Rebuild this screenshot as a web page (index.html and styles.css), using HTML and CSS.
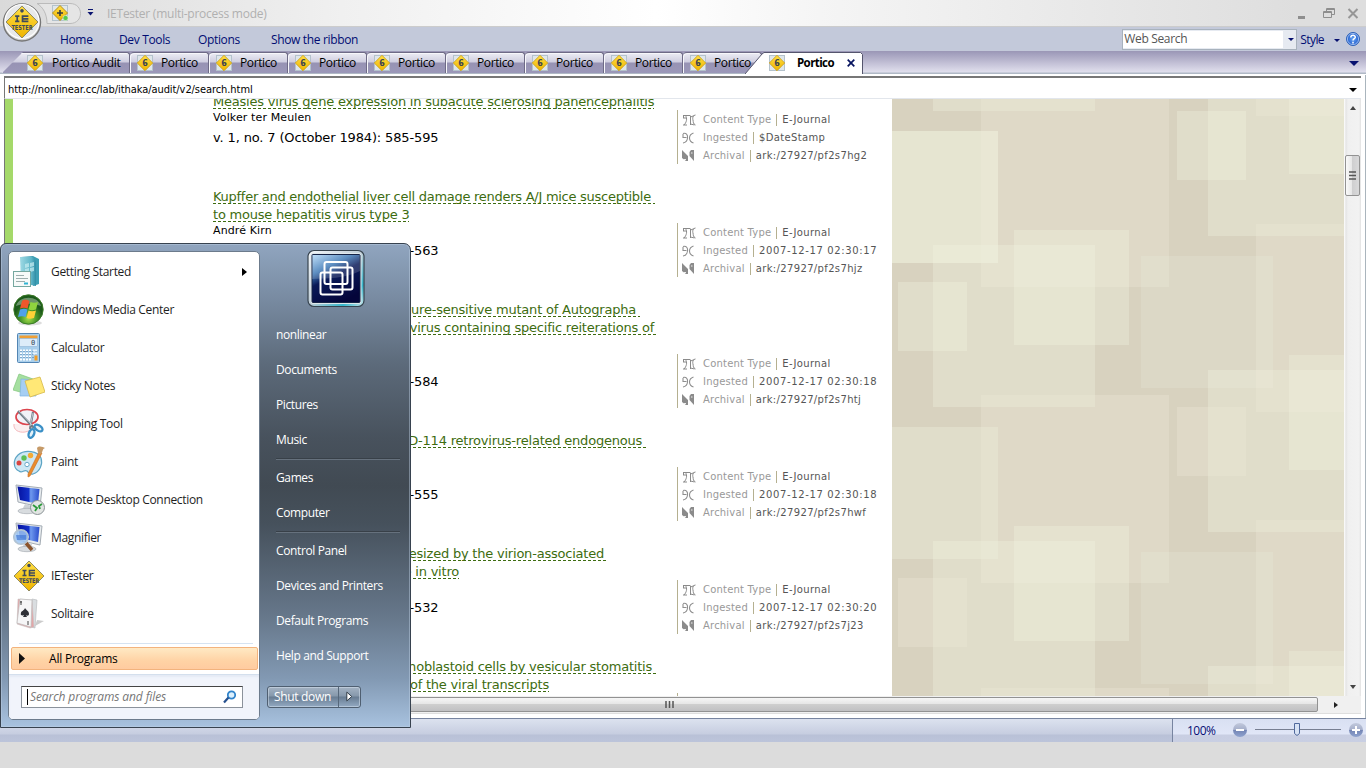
FILE: index.html
```html
<!DOCTYPE html>
<html lang="en">
<head>
<meta charset="utf-8">
<title>IETester</title>
<link rel="stylesheet" href="styles.css">
</head>
<body>
<svg class="defs" width="0" height="0">
  <defs>
    <linearGradient id="gold" x1="0" y1="0" x2="0" y2="1"><stop offset="0" stop-color="#ffdf45"/><stop offset="1" stop-color="#efb400"/></linearGradient>
    <linearGradient id="screen" x1="0" y1="0" x2="1" y2="0"><stop offset="0" stop-color="#0512a0"/><stop offset=".5" stop-color="#1230c8"/><stop offset=".6" stop-color="#6f9aee"/><stop offset="1" stop-color="#2a4ccc"/></linearGradient>
    <linearGradient id="knob" x1="0" y1="0" x2="0" y2="1"><stop offset="0" stop-color="#c2c9dc"/><stop offset=".48" stop-color="#a5afca"/><stop offset=".5" stop-color="#7384b4"/><stop offset="1" stop-color="#8fa3cf"/></linearGradient>
    <radialGradient id="help"><stop offset="0" stop-color="#69a7f5"/><stop offset="1" stop-color="#1c57c9"/></radialGradient>
    <linearGradient id="teal" x1="0" y1="0" x2="1" y2="0"><stop offset="0" stop-color="#9ed9e4"/><stop offset=".7" stop-color="#5fb6c8"/><stop offset="1" stop-color="#2f8da5"/></linearGradient>
    <radialGradient id="wmc" cx=".5" cy=".8"><stop offset="0" stop-color="#a9e04a"/><stop offset=".5" stop-color="#4f9d2c"/><stop offset="1" stop-color="#1d5a1b"/></radialGradient>
    <linearGradient id="avatar" x1=".1" y1="0" x2=".6" y2="1"><stop offset="0" stop-color="#a8d0f2"/><stop offset=".3" stop-color="#3d78b5"/><stop offset=".5" stop-color="#0a1a58"/><stop offset="1" stop-color="#04053a"/></linearGradient>
    <linearGradient id="rim" x1="0" y1="0" x2="1" y2="1"><stop offset="0" stop-color="#f4f8fb"/><stop offset=".5" stop-color="#bfcdd6"/><stop offset=".8" stop-color="#35b6cc"/><stop offset="1" stop-color="#cfe6ec"/></linearGradient>
    <symbol id="six" viewBox="0 0 16 16">
      <rect x=".5" y=".5" width="15" height="15" fill="#dfe6ea" stroke="#b4c2cc"/>
      <path d="M8 .3 15.7 8 8 15.7.3 8z" fill="url(#gold)" stroke="#c99a12" stroke-width=".8"/>
      <text x="8" y="11" text-anchor="middle" font-family="DejaVu Sans" font-weight="bold" font-size="8" fill="#3d4450">6</text>
    </symbol>
    <symbol id="sign" viewBox="0 0 32 32">
      <path d="M16 1 31 16 16 31 1 16z" fill="url(#gold)" stroke="#85815a" stroke-width=".9" stroke-linejoin="round"/>
      <circle cx="16" cy="5.500" r="1.700" fill="#3e4a5c"/>
      <path d="M9.500 10.500h4M9.500 15.500h4M11.500 10v6M22 10.500h-5.500v5H22M16.500 13H22" fill="none" stroke="#3e4a5c" stroke-width="1.600"/>
      <text x="16" y="23.300" text-anchor="middle" textLength="20" lengthAdjust="spacingAndGlyphs" font-family="DejaVu Sans" font-weight="bold" font-size="6.400" fill="#3e4a5c">TESTER</text>
    </symbol>
    <symbol id="monitor" viewBox="0 0 32 32">
      <path d="M3 1 29 4 27 23 5 18z" fill="#e8ecef" stroke="#a4acb4"/>
      <path d="M4.500 2.500 26.500 5 25 20 7 16z" fill="url(#screen)"/>
      <path d="M12 20 19 22 18 27 9 26z" fill="#cdd2d7"/><ellipse cx="14" cy="27" rx="9" ry="2.700" fill="#d8dcdf" stroke="#a7adb3" stroke-width=".7"/>
    </symbol>
    <symbol id="i-type" viewBox="0 0 14 12"><path d="M1 1.500h7M1 4h3M1 11h4M3.500 1.500c2 3 1 7-1.500 9.500M8.500 1.500v9.500M1.500 1v3M13.500 1c-3 .5-3 3.500-2.500 5 .4 2 0 4 2.500 5M8.500 3l4-1.500M8.500 10l4 1" fill="none" stroke="#8a8a8a"/></symbol>
    <symbol id="i-ing" viewBox="0 0 14 12"><path d="M1 1.500c3-1 5 1 4.500 4.500C5.300 8.500 4 10.500 1 11M1 2v3.500h3.500M11.500 1C8.500 2 7.500 4 7.500 6s1 4 4 5" fill="none" stroke="#8e8e8e" stroke-width="1.100"/></symbol>
    <symbol id="i-arch" viewBox="0 0 14 12"><path d="M0 0 6 6v5H4L0 8zM7.500 2 9 0h3v11l-4.500-5z" fill="#8b8b8b"/><path d="M9 3h1.500M2 9.500h2" stroke="#eee"/></symbol>
  </defs>
</svg>

<div class="window">
  <header class="titlebar">
    <svg class="qat" width="110" height="27" viewBox="0 0 110 27">
      <path d="M37 3.500H70c14 0 14 20 0 20H47C47 14 43 7 37 3.500z" fill="#e5e5e5" stroke="#bbb"/>
      <rect x="52.500" y="5.500" width="15" height="15" fill="#e1e7e9" stroke="#b4c2cc"/>
      <path d="M60 5.500 67.500 13 60 20.500 52.500 13z" fill="url(#gold)" stroke="#b48e1a"/>
      <path d="M60 10v6M57 13h6" stroke="#333d44" stroke-width="1.600"/>
      <circle cx="65.500" cy="18" r="2.600" fill="#58c94b" stroke="#e8f6e5" stroke-width=".6"/>
      <path d="M88 9.500h5" stroke="#0a1470"/><path d="M87.500 12h6l-3 3.500z" fill="#0a1470"/>
    </svg>
    <h1>IETester (multi-process mode)</h1>
    <svg class="controls" width="70" height="20" viewBox="-4 0 70 20">
      <path d="M-2 14.500h7" stroke="#8e8e8e" stroke-width="3"/>
      <path d="M26.500 8V5.500h8v6H32M26.500 6.500h8M23.500 8.500h8v6h-8zM23.500 9.500h8" fill="none" stroke="#8e8e8e"/>
      <path d="M48.500 6l9 9M57.500 6l-9 9" stroke="#969696" stroke-width="2"/>
    </svg>
  </header>

  <nav class="menubar">
    <span class="m1">Home</span><span class="m2">Dev Tools</span><span class="m3">Options</span><span class="m4">Show the ribbon</span>
    <div class="search"><div class="search-text">Web Search</div><i class="arrow navy"></i></div>
    <span class="style">Style</span><i class="arrow navy"></i>
    <svg class="help" width="14" height="14" viewBox="0 0 14 14"><circle cx="7" cy="7" r="6.500" fill="url(#help)" stroke="#2e62b8"/><circle cx="7" cy="7" r="5.600" fill="none" stroke="#c5dcfa" stroke-width=".7"/><path d="M4.800 5.500C4.800 2.600 9.400 2.700 9.300 5.200 9.200 6.700 7 6.700 7 8.500M7 9.700v1.700" fill="none" stroke="#fff" stroke-width="1.500"/></svg>
  </nav>

  <div class="tabs">
    <div class="tab first"><svg class="ico"><use href="#six"/></svg><span>Portico Audit</span></div>
    <div class="tab"><svg class="ico"><use href="#six"/></svg><span>Portico</span></div>
    <div class="tab"><svg class="ico"><use href="#six"/></svg><span>Portico</span></div>
    <div class="tab"><svg class="ico"><use href="#six"/></svg><span>Portico</span></div>
    <div class="tab"><svg class="ico"><use href="#six"/></svg><span>Portico</span></div>
    <div class="tab"><svg class="ico"><use href="#six"/></svg><span>Portico</span></div>
    <div class="tab"><svg class="ico"><use href="#six"/></svg><span>Portico</span></div>
    <div class="tab"><svg class="ico"><use href="#six"/></svg><span>Portico</span></div>
    <div class="tab"><svg class="ico"><use href="#six"/></svg><span>Portico</span></div>
    <div class="active">
      <svg class="active-shape" width="118" height="22" viewBox="0 0 118 22"><path d="M0 22 17 2 19 .5H115.500L117.500 2.500V22z" fill="#fff"/><path d="M0 22 17 2 19 .5H115.500L117.500 2.500V22" fill="none" stroke="#55556d"/></svg>
      <svg class="ico"><use href="#six"/></svg><b>Portico</b>
      <svg class="close" width="8" height="8" viewBox="0 0 8 8"><path d="M.7.7l6.600 6.600M7.300.7.700 7.300" stroke="#06135f" stroke-width="1.700"/></svg>
    </div>
    <i class="arrow navy big"></i>
  </div>

  <div class="frame">
    <div class="address"><span>http://nonlinear.cc/lab/ithaka/audit/v2/search.html</span><i class="arrow big"></i></div>
    <div class="view">
      <main class="page">
        <div class="green"></div>
        <div class="list">
          <article class="lead">
            <div class="cite"><h2><span>Measles virus gene expression in subacute sclerosing panencephalitis</span></h2><p class="author">Volker ter Meulen</p><p class="vol">v. 1, no. 7 (October 1984): 585-595</p></div>
            <ul class="meta"><li><svg><use href="#i-type"/></svg><em>Content Type</em><q>E-Journal</q></li><li><svg><use href="#i-ing"/></svg><em>Ingested</em><q>$DateStamp</q></li><li><svg><use href="#i-arch"/></svg><em>Archival</em><q>ark:/27927/pf2s7hg2</q></li></ul>
          </article>
          <article>
            <div class="cite"><h2><span class="tight">Kupffer and endothelial liver cell damage renders A/J mice susceptible&nbsp;</span><span>to mouse hepatitis virus type 3</span></h2><p class="author">André Kirn</p><p class="vol">v. 1, no. 7 (October 1984): 555-563</p></div>
            <ul class="meta"><li><svg><use href="#i-type"/></svg><em>Content Type</em><q>E-Journal</q></li><li><svg><use href="#i-ing"/></svg><em>Ingested</em><q class="date">2007-12-17 02:30:17</q></li><li><svg><use href="#i-arch"/></svg><em>Archival</em><q>ark:/27927/pf2s7hjz</q></li></ul>
          </article>
          <article>
            <div class="cite ends"><h2><span class="e427">A temperature-sensitive mutant of Autographa&nbsp;</span><span class="e445">nuclear polyhedrosis virus containing specific reiterations of&nbsp;</span><span>&nbsp;</span></h2><p class="author"></p><p class="vol">v. 1, no. 7 (October 1984): 573-584</p></div>
            <ul class="meta"><li><svg><use href="#i-type"/></svg><em>Content Type</em><q>E-Journal</q></li><li><svg><use href="#i-ing"/></svg><em>Ingested</em><q class="date">2007-12-17 02:30:18</q></li><li><svg><use href="#i-arch"/></svg><em>Archival</em><q>ark:/27927/pf2s7htj</q></li></ul>
          </article>
          <article>
            <div class="cite ends"><h2><span class="e433">Expression of RD-114 retrovirus-related endogenous&nbsp;</span><span>&nbsp;</span></h2><p class="author"></p><p class="vol">v. 1, no. 7 (October 1984): 545-555</p></div>
            <ul class="meta"><li><svg><use href="#i-type"/></svg><em>Content Type</em><q>E-Journal</q></li><li><svg><use href="#i-ing"/></svg><em>Ingested</em><q class="date">2007-12-17 02:30:18</q></li><li><svg><use href="#i-arch"/></svg><em>Archival</em><q>ark:/27927/pf2s7hwf</q></li></ul>
          </article>
          <article>
            <div class="cite ends"><h2><span class="e395">RNA synthesized by the virion-associated&nbsp;</span><span class="e246">polymerase in vitro</span></h2><p class="author"></p><p class="vol">v. 1, no. 7 (October 1984): 521-532</p></div>
            <ul class="meta"><li><svg><use href="#i-type"/></svg><em>Content Type</em><q>E-Journal</q></li><li><svg><use href="#i-ing"/></svg><em>Ingested</em><q class="date">2007-12-17 02:30:20</q></li><li><svg><use href="#i-arch"/></svg><em>Archival</em><q>ark:/27927/pf2s7j23</q></li></ul>
          </article>
          <article>
            <div class="cite ends"><h2><span class="e443">Infection of lymphoblastoid cells by vesicular stomatitis&nbsp;</span><span class="e336">virus: analysis of the viral transcripts</span></h2><p class="author"></p><p class="vol"></p></div>
            <ul class="meta"></ul>
          </article>
        </div>
        <svg class="pattern" width="452" height="597" viewBox="892 99 452 597" shape-rendering="crispEdges">
          <defs>
            <g id="tile">
              <rect x="981" y="99" width="188" height="188" fill="#f0ecdc" opacity=".28"/>
              <rect x="933" y="245" width="162" height="162" fill="#f1f3e0" opacity=".35"/>
              <rect x="1014" y="230" width="115" height="115" fill="#f1f3e0" opacity=".35"/>
              <rect x="1141" y="256" width="132" height="132" fill="#ebf0dc" opacity=".24"/>
              <rect x="1208" y="370" width="140" height="162" fill="#f1f3e0" opacity=".35"/>
              <rect x="1289" y="355" width="60" height="115" fill="#f1f3e0" opacity=".35"/>
              <rect x="1256" y="224" width="90" height="188" fill="#f0ecdc" opacity=".28"/>
            </g>
          </defs>
          <rect x="892" y="99" width="452" height="597" fill="#d8d2bf"/>
          <rect x="892" y="131" width="106" height="132" fill="#f1f3e0" opacity=".57"/>
          <rect x="892" y="427" width="106" height="132" fill="#f1f3e0" opacity=".35"/>
          <use href="#tile" y="-296"/><use href="#tile"/><use href="#tile" y="296"/><use href="#tile" y="589"/>
          <rect x="898" y="282" width="69" height="69" fill="#f1f3e0" opacity=".35"/>
          <rect x="898" y="578" width="69" height="69" fill="#f0ecdc" opacity=".28"/>
          <rect x="1177" y="111" width="69" height="69" fill="#f1f3e0" opacity=".35"/>
          <rect x="1177" y="407" width="69" height="69" fill="#f0ecdc" opacity=".28"/>
        </svg>
        <div class="vscroll"><i class="tri up"></i><div class="vthumb"><svg width="7" height="9" viewBox="0 0 7 9"><path d="M0 1h7M0 4.500h7M0 8h7" stroke="#555" stroke-width="1.500"/></svg></div><i class="tri down"></i></div>
      </main>
      <div class="hscroll"><div class="hthumb"></div><svg class="grip" width="9" height="7" viewBox="0 0 9 7"><path d="M1 0v7M4.500 0v7M8 0v7" stroke="#555" stroke-width="1.500"/></svg><i class="tri right"></i></div>
    </div>
  </div>

  <footer class="status">
    <div class="zoom"><span>100%</span>
      <svg width="134" height="18" viewBox="0 0 134 18"><circle cx="8" cy="9" r="7" fill="url(#knob)"/><path d="M4 9h8" stroke="#fff" stroke-width="2"/><path d="M23 8.500h86" stroke="#777f92"/><path d="M62.500 2.500h5v10l-2.500 2-2.500-2z" fill="#d7e2f4" stroke="#50699c"/><circle cx="124" cy="9" r="7" fill="url(#knob)"/><path d="M120 9h8M124 5v8" stroke="#fff" stroke-width="2"/></svg>
    </div>
  </footer>
</div>

<svg class="orb" width="40" height="40" viewBox="0 0 40 40"><circle cx="20" cy="20.500" r="18.500" fill="#d0d0d0" stroke="#777" stroke-width="1.400"/><circle cx="20" cy="19.500" r="17" fill="#e8e9ea" stroke="#fff" stroke-width="1.200"/><svg x="3" y="3" width="34" height="34"><use href="#sign"/></svg></svg>

<aside class="start">
  <section class="left">
    <ul class="apps">
      <li><svg viewBox="0 0 32 32"><path d="M8 1 20 0l6 3v25l-6 2V8z" fill="#3d9fb4"/><path d="M7 1h12c3 1 4 4 4 9v20L8 27z" fill="url(#teal)"/><path d="M12 8l4-1v4l-4 1zM17 7l4-1v4l-4 1zM12 13l4-1v4l-4 1zM17 12l4-1v4l-4 1z" fill="#c9eef2" opacity=".7"/><rect x=".5" y="15.500" width="17" height="15" fill="#f7faf9" stroke="#75a79f"/><path d="M3 19.500h8M3 22.500h12M3 25.500h9" stroke="#9daeae"/><path d="M11 27.500h4" stroke="#31b3d3" stroke-width="2"/></svg><span>Getting Started</span><i class="more"></i></li>
      <li><svg viewBox="0 0 32 32"><ellipse cx="17" cy="29" rx="12" ry="2.500" fill="#bbb" opacity=".5"/><circle cx="15.500" cy="15.500" r="14.700" fill="url(#wmc)" stroke="#3c7b27"/><path d="M3 12C6 1 25 1 28 12 20 9 11 9 3 12z" fill="#fff" opacity=".35"/><path d="M9 7c3-2 5-1 7.500 0l-2 7.500c-2-1-5-1-7.500 0z" fill="#f0572b"/><path d="M17.500 8c2 1 5 1 7.500 0l-2 7.500c-3 1-5 1-7.500 0z" fill="#8fd43e"/><path d="M7 15.500c3-1 5-1 7.500 0l-2 7.500c-2-1-5-1-7.500 0z" fill="#4fa1ea"/><path d="M15.500 16.500c2 1 5 1 7.500 0l-2 7.500c-3 1-5 1-7.500 0z" fill="#ffd137"/></svg><span>Windows Media Center</span></li>
      <li><svg viewBox="0 0 32 32"><rect x="4.500" y="1.500" width="22" height="29" rx="1" fill="#a9cfec" stroke="#5285b3"/><rect x="6.500" y="3.500" width="18" height="3" fill="#ef9f35"/><rect x="6.500" y="6.500" width="18" height="8" fill="#ddecf9" stroke="#86aed0" stroke-width=".5"/><text x="22" y="13" text-anchor="end" font-family="DejaVu Sans Mono" font-size="7" fill="#345">0</text><path d="M7 18.500h11M7 21.500h11M7 24.500h11M7 27.500h11" stroke="#fff" stroke-width="2" stroke-dasharray="2 1"/><path d="M7 19.500h17M7 22.500h17M7 25.500h17" stroke="#5f8cb9" stroke-width=".7" stroke-dasharray="2 1"/><path d="M20 18.500h4M20 21.500h4" stroke="#e9f3fb" stroke-width="2"/><rect x="21.500" y="23.500" width="3" height="5" fill="#f49d25"/></svg><span>Calculator</span></li>
      <li><svg viewBox="0 0 32 32"><path d="M6 4 20 9 14 24 0 20z" fill="#a6dfa0" stroke="#81c57d" stroke-width=".7"/><path d="M8 9l16 1-1 16H7z" fill="#a6cef3" stroke="#80b2e0" stroke-width=".7"/><path d="M12 11 27 7l5 15-15 5z" fill="#ffe876" stroke="#d5b747" stroke-width=".8"/></svg><span>Sticky Notes</span></li>
      <li><svg viewBox="0 0 32 32"><path d="M1 16c-1 6 5 9 11 8s8-5 7-8" fill="#fbeff0" stroke="#f3b9bd"/><ellipse cx="14" cy="9" rx="11" ry="7.500" fill="#f1f2f8" stroke="#dc454e" stroke-width="1.700"/><path d="M5 3 21 20M20 4 17 21" stroke="#6f7b86" stroke-width="2.200"/><path d="M6 3 19 17M20 5 17 18" stroke="#d4dae0" stroke-width=".8"/><ellipse cx="25.500" cy="20" rx="4.500" ry="2.600" transform="rotate(35 25.500 20)" fill="#e4f1f8" stroke="#3a8fc6" stroke-width="2.400"/><ellipse cx="18.500" cy="25.500" rx="4.500" ry="2.600" transform="rotate(-68 18.500 25.500)" fill="#e4f1f8" stroke="#3a8fc6" stroke-width="2.400"/></svg><span>Snipping Tool</span></li>
      <li><svg viewBox="0 0 32 32"><path d="M5 9C12 3 25 5 28 12c2 6-1 14-8 16-3 1-4-1-6-3-3-2-5 3-8 0-5-2-7-10-1-16z" fill="#cde7f4" stroke="#5ea5c5" stroke-width="1.200"/><circle cx="11" cy="12" r="2.700" fill="#5dbf55"/><circle cx="17.500" cy="9.500" r="2.700" fill="#f4ab36"/><circle cx="6" cy="17" r="2.500" fill="#da4540"/><circle cx="14" cy="18.500" r="2.200" fill="#fff" stroke="#6ba9c9"/><path d="M26 6l3 1-12 23-2 1v-3z" fill="#ea8c2d" stroke="#c9691b" stroke-width=".6"/><path d="M24 2c2-3 6-1 8 0-3 1-2 4-4 6l-3-1z" fill="#c69a68"/></svg><span>Paint</span></li>
      <li><svg viewBox="0 0 32 32"><use href="#monitor"/><circle cx="24.500" cy="23.500" r="7" fill="#e2e5e3" stroke="#8b9396"/><path d="M20 21l4 3-2 3M29 20l-3 2 1 3" fill="none" stroke="#2c9a3a" stroke-width="1.800"/></svg><span>Remote Desktop Connection</span></li>
      <li><svg viewBox="0 0 32 32"><use href="#monitor"/><path d="M13 21l6 7" stroke="#8b542c" stroke-width="3.500"/><circle cx="8" cy="15" r="7.200" fill="#9ec5f3" fill-opacity=".85" stroke="#b2c4d4" stroke-width="1.700"/><path d="M3 13h10v5H4z" fill="#376fd4" opacity=".6"/></svg><span>Magnifier</span></li>
      <li><svg><use href="#sign"/></svg><span>IETester</span></li>
      <li><svg viewBox="0 0 32 32"><path d="M22 28 31 23l-7-1z" fill="#ccc"/><path d="M19 1l5 1-2 28-4-1z" fill="#d9dde0" stroke="#b3b7ba" stroke-width=".6"/><path d="M5 1l14 1 2 27-4 1L4 26z" fill="#e3a6a8" stroke="#c6c6c6" stroke-width=".6"/><path d="M7 1l12 1-1 27L4 25z" fill="#f6f6f7" stroke="#bbb" stroke-width=".7"/><path d="M12 10c2 3 4 3 4 6 0 2-2 2-3 1l1 2h-4l1-2c-2 1-4 0-3-2 0-2 3-2 4-5z" fill="#2e3036"/><path d="M7 4h2M8 3v4M15 23v4" stroke="#444" stroke-width="1"/></svg><span>Solitaire</span></li>
    </ul>
    <div class="rule"></div>
    <div class="all"><svg width="8" height="12" viewBox="0 0 8 12"><path d="M0 0l6 5.500L0 11z" fill="#111"/></svg><span>All Programs</span></div>
    <div class="find"><div class="field"><span>Search programs and files</span><svg width="14" height="14" viewBox="0 0 14 14"><circle cx="8.500" cy="5" r="3.700" fill="#dcf0fd" stroke="#3184cb" stroke-width="1.800"/><path d="M5.500 7.500 1 12.500" stroke="#26508e" stroke-width="2.200"/></svg></div></div>
  </section>
  <section class="right">
    <svg class="avatar" width="58" height="60" viewBox="0 0 58 60"><rect x="1" y="1.500" width="56" height="56" rx="6" fill="url(#rim)" stroke="#37444f" stroke-width="1.200"/><rect x="3.500" y="4" width="51" height="51" rx="3" fill="#dfe8ec"/><rect x="5" y="5.500" width="48" height="48" rx="1" fill="url(#avatar)" stroke="#152345"/><path d="M5 6h48v16C38 30 20 29 5 30z" fill="#fff" opacity=".16"/><g fill="none" stroke="#fff" stroke-width="2"><rect x="17.500" y="13" width="23" height="22" rx="2"/><rect x="23.500" y="18.500" width="22" height="22" rx="2"/><rect x="13.500" y="23.500" width="22" height="22" rx="2"/></g></svg>
    <ul class="places"><li>nonlinear</li><li>Documents</li><li>Pictures</li><li>Music</li><li class="sep">Games</li><li>Computer</li><li class="sep">Control Panel</li><li>Devices and Printers</li><li>Default Programs</li><li>Help and Support</li></ul>
    <div class="power"><span>Shut down</span><svg width="22" height="22" viewBox="0 0 22 22"><path d="M8 6v9l5-4.500z" fill="#fff" stroke="#2d3843"/></svg></div>
  </section>
</aside>
</body>
</html>
```
FILE: styles.css
```css
* { box-sizing: border-box; }
body { margin: 0; width: 1366px; height: 768px; overflow: hidden; background: #dcdcdc; font: 12px/16px "Open Sans", "Noto Sans", sans-serif; color: #1e1e1e; }
h1, h2, p, ul { margin: 0; padding: 0; font-weight: normal; }
ul { list-style: none; }
.defs { position: absolute; }
.window { display: flex; flex-direction: column; height: 742px; background: #fff; }

.titlebar { display: flex; align-items: flex-start; height: 27px; background: linear-gradient(90deg, #dadada, #f0f0f0 25%, #fff 48%, #f5f5f5 60%, #dedede 95%); border-bottom: 1px solid #ccc; }
.titlebar h1 { margin: 5px auto 0 -3px; font-size: 12px; line-height: 18px; letter-spacing: -0.25px; color: #b0b0b0; }
.controls { margin-top: 3px; }
.menubar { display: flex; align-items: center; height: 24px; padding: 2px 6px 0 0; background: #c3c9da; color: #000c72; letter-spacing: -0.35px; white-space: nowrap; }
.m1 { margin-left: 60px; width: 59px; }
.m2 { width: 79px; }
.m3 { width: 73px; }
.search { display: flex; align-items: center; width: 175px; height: 21px; margin: -2px 0 0 auto; border: 1px solid #a8b2bd; background: #e6eaf1; }
.search-text { width: 160px; height: 17px; margin-right: 5px; padding-left: 1px; background: #fff; color: #555; line-height: 16px; }
.style { margin: 0 10px 0 3px; letter-spacing: -0.6px; }
.help { margin: -2px 0 0 6px; }
.arrow { flex: none; width: 0; height: 0; border: 3px solid transparent; border-top: 3px solid #000; border-bottom: 0; }
.navy { border-top-color: #06106f; }
.big { border-width: 4px 4px 0; }

.tabs { display: flex; height: 24px; padding: 1px 7px 0 2px; background: linear-gradient(#9a96b6, #e0dfed 21px, #b0b9c6 22px, #b0b9c6 23px, #fff 23px); color: #000; }
.ico { flex: none; width: 16px; height: 16px; }
.tab { display: flex; align-items: center; width: 79px; height: 21px; padding: 0 0 1px 7px; border-right: 1px solid #6e6b86; border-top: 1px solid #6e6b86; border-radius: 4px 3px 0 0; background: linear-gradient(#ececf4, #cfcee0 9px, #9793b4 10px, #9b98b9); box-shadow: inset 1px 1px #f7f7fb; }
.tab span { margin-left: 8px; letter-spacing: -0.4px; white-space: nowrap; }
.first { width: 128px; padding-left: 25px; clip-path: polygon(21px 0, 100% 0, 100% 100%, 0 100%, 16px 5px); }
.first span { margin-left: 9px; letter-spacing: -0.3px; }
.active { display: grid; grid-template-columns: 24px 16px 12px 50px 10px; align-items: center; margin-left: -17px; width: 118px; height: 22px; }
.active > * { grid-row: 1; }
.active-shape { grid-column: 1 / 6; }
.active .ico { grid-column: 2; }
.active b { grid-column: 4; font-size: 11.5px; letter-spacing: -0.6px; }
.active .close { grid-column: 5; }
.tabs .big { border-width: 5px 5px 0; margin: 9px 0 0 auto; }

.frame { height: 643px; padding: 1px 4px 0; border-right: 1px solid #aab5bd; }
.address { display: flex; align-items: center; height: 23px; padding: 3px 4px 0 3px; border: solid #777; border-width: 2px 0 0 1px; border-bottom: 1px solid #e2e6ec; font: 11px/16px "DejaVu Sans Condensed", "DejaVu Sans", sans-serif; letter-spacing: -0.07px; color: #000; }
.address .arrow { margin-left: auto; }
.view { width: 1357px; border-left: 1px solid #777; }
.page { display: flex; height: 597px; overflow: hidden; font-family: "DejaVu Sans", sans-serif; }
.green { width: 8px; background: #a5d96a; }
.list { width: 879px; padding-left: 200px; overflow: hidden; }
article { display: flex; align-items: flex-end; }
.lead { margin-top: -6px; }
.cite { width: 464px; padding-bottom: 41px; }
h2 span { display: block; width: max-content; height: 18px; font-size: 13px; line-height: 17px; letter-spacing: -0.21px; white-space: nowrap; color: #3d6c10; background: repeating-linear-gradient(90deg, #3d6c10 0 3px, transparent 3px 5px) 0 15px / 100% 1px no-repeat; }
h2 .tight { letter-spacing: -0.27px; }
.ends h2 span { text-align: right; }
.ends .e427 { width: 427px; }
.ends .e445 { width: 445px; }
.ends .e433 { width: 433px; }
.ends .e395 { width: 395px; }
.ends .e246 { width: 246px; }
.ends .e443 { width: 443px; }
.ends .e336 { width: 336px; }
.author { height: 18px; font-size: 11px; line-height: 13px; letter-spacing: 0.12px; color: #000; }
.vol { height: 18px; font-size: 13px; line-height: 18px; letter-spacing: -0.14px; color: #000; }
.meta { width: 214px; height: 54px; margin-bottom: 24px; padding: 1px 0 0 4px; border-left: 1px solid #b5b090; font-size: 10px; }
.meta li { display: flex; align-items: center; height: 18px; white-space: nowrap; }
.meta svg { width: 14px; height: 12px; margin-right: 7px; }
.meta em { font-style: normal; color: #999; padding-right: 5px; border-right: 1px solid #b5b090; line-height: 12px; letter-spacing: 0.2px; }
.meta q { quotes: none; padding-left: 5px; color: #555; letter-spacing: 0.35px; }
.meta .date { letter-spacing: 0.63px; }
.pattern { flex: none; }
.vscroll { display: flex; flex-direction: column; align-items: center; width: 17px; height: 597px; padding: 7px 1px 7px 1px; background: linear-gradient(90deg, #fff, #e5e5e5 2px, #f0f0f0 4px, #f2f2f2 15px, #e2e2e2); }
.tri { width: 0; height: 0; border: 3.5px solid transparent; }
.up { border-bottom: 4px solid #444; border-top: 0; }
.down { border-top: 4px solid #444; border-bottom: 0; margin-top: auto; }
.vthumb { display: grid; place-items: center; width: 15px; height: 41px; margin-top: 45px; border: 1px solid #929292; border-radius: 2px; background: linear-gradient(90deg, #fafafa, #e7e7e7 45%, #cfcfd0 50%, #d9d9da); }
.hscroll { display: flex; align-items: center; height: 18px; background: #f0f0f0; border-bottom: 1px solid #dedede; }
.hthumb { width: 1313px; height: 15px; border: 1px solid #929292; border-radius: 2px; background: linear-gradient(#f6f6f6, #e6e6e6 45%, #cecece 50%, #c0c0c2); }
.grip { margin: 0 644px 0 -653px; }
.hscroll .right { margin-left: 16px; border-left: 4px solid #222; border-right: 0; }

.status { display: flex; justify-content: flex-end; height: 24px; border-top: 1px solid #7784a0; background: linear-gradient(#dce2ef, #c6cde0 15px, #b9c1d7 16px, #bcc4da); }
.zoom { display: flex; align-items: center; width: 194px; padding-left: 14px; border-left: 1px solid #7784a0; background: linear-gradient(#d9e0f2, #e0e6f7 15px, #c8cee2 16px, #c9cfe3); color: #060e74; }
.zoom span { width: 45px; letter-spacing: -0.5px; }
.zoom svg { flex: none; margin-top: -1px; }
.orb { position: absolute; left: 2px; top: 2px; }

.start { position: absolute; left: 0; top: 243px; width: 411px; height: 485px; display: flex; padding: 7px; border: 1px solid #37424f; border-radius: 6px 7px 0 0; background: linear-gradient(#90a5bf, #7b8ea5 10%, #5c6a7a 25%, #48525d 40%, #414a53 50%, #46515c 58%, #66778a 77%, #8299b3 90%, #a8c2df); box-shadow: inset 0 0 0 1px rgba(190, 208, 228, .45); letter-spacing: -0.32px; }
.left { width: 252px; height: 469px; overflow: hidden; border: 1px solid #6c7b8c; border-radius: 5px; background: #fff; }
.apps { padding-top: 1px; }
.apps li { display: flex; align-items: center; height: 38px; padding-left: 4px; }
.apps svg { width: 32px; height: 32px; margin-right: 6px; }
.more { margin: 0 12px 0 auto; border: 4px solid transparent; border-left: 5px solid #000; border-right: 0; }
.rule { height: 1px; margin: 10px 6px 3px 10px; background: #d6e3f1; }
.all { display: flex; align-items: center; height: 23px; margin: 0 1px 4px 2px; padding-left: 7px; gap: 22px; border: 1px solid #f3b37d; border-radius: 2px; background: linear-gradient(#ffe9c4, #ffd3a5 60%, #ffcba0); color: #000; letter-spacing: -0.2px; }
.find { height: 46px; padding: 11px 0 0 12px; border-top: 1px solid #d4dfed; background: #f1f4fb; box-shadow: inset 0 2px 2px #e4eaf5; }
.field { display: flex; align-items: center; justify-content: space-between; width: 222px; height: 22px; padding: 0 5px; border: 1px solid #8b929b; border-top-color: #444; background: #fff; }
.field span { border-left: 1px solid #000; padding-left: 2px; font-style: italic; letter-spacing: -0.1px; color: #777; }
.right { display: flex; flex-direction: column; }
.avatar { margin: -2px 0 0 47px; }
.places { margin-left: 16px; padding-top: 8px; letter-spacing: -0.38px; color: #fff; }
.places li { width: 124px; height: 35px; line-height: 35px; }
.places .sep { height: 38px; padding-top: 3px; background: linear-gradient(#384048 1px, #66717d 1px, #66717d 2px, transparent 2px) 0 1px no-repeat; }
.power { display: flex; width: 94px; height: 22px; margin: 13px 0 0 7px; border: 1px solid #4f5f71; border-radius: 3px; box-shadow: inset 0 0 0 1px rgba(215, 228, 240, .5); background: linear-gradient(#a4b3c4, #8698ab 45%, #687c92 50%, #93aac3); color: #fff; }
.power span { width: 72px; padding-left: 6px; line-height: 20px; border-right: 1px solid #56677a; }
.power svg { margin-top: -1px; }
```
